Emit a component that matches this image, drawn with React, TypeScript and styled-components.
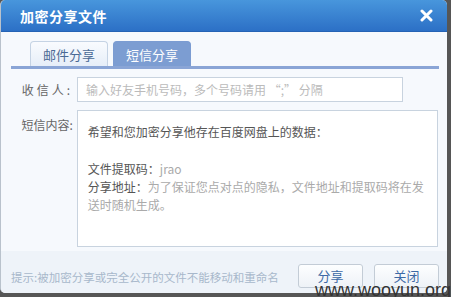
import React from "react";
import styled, { createGlobalStyle } from "styled-components";

const Global = createGlobalStyle`
  html, body { margin: 0; padding: 0; background: #565656; }
  body { font-family: "Noto Sans CJK SC", "Noto Sans", sans-serif; font-size: 12px; }
`;

const Stage = styled.div`
  position: relative;
  width: 451px;
  height: 297px;
  overflow: hidden;
`;

const Dialog = styled.div`
  width: 447px;
  height: 293px;
  background: #f6f9fd;
  border-radius: 5px;
  overflow: hidden;
  display: flex;
  flex-direction: column;
  box-sizing: border-box;
  border-left: 1px solid #b9c2cc;
`;

const Header = styled.div`
  height: 32px;
  flex: none;
  background: linear-gradient(#4896dc, #2c70c6);
  border-bottom: 1px solid #2563b5;
  box-sizing: border-box;
  display: flex;
  align-items: center;
  justify-content: space-between;
  padding: 0 14px 0 19px;
`;

const Title = styled.div`
  color: #fff;
  font-size: 14px;
  font-weight: bold;
  letter-spacing: 0.5px;
`;

const Close = styled.svg`
  width: 13px;
  height: 13px;
`;

const Tabs = styled.div`
  display: flex;
  gap: 5px;
  margin: 9px 8px 0 10px;
  padding-left: 19px;
  border-bottom: 3px solid #8aa5d6;
`;

const Tab = styled.div<{ $active?: boolean }>`
  width: 78px;
  height: 25px;
  box-sizing: border-box;
  display: flex;
  align-items: center;
  justify-content: center;
  border-radius: 4px 4px 0 0;
  font-size: 13px;
  border: 1px solid ${(p) => (p.$active ? "#7b9cd2" : "#c5d3e4")};
  border-bottom: none;
  background: ${(p) => (p.$active ? "#7c9dd2" : "linear-gradient(#f9fbfe, #e6eef8)")};
  color: ${(p) => (p.$active ? "#fff" : "#4a6a95")};
`;

const Body = styled.div`
  flex: 1;
  display: flex;
  flex-direction: column;
  gap: 8px;
  padding: 8px 9px 0 0;
`;

const Row = styled.div<{ $top?: boolean }>`
  display: flex;
  align-items: ${(p) => (p.$top ? "flex-start" : "center")};
`;

const Label = styled.div<{ $spaced?: boolean }>`
  width: 72px;
  text-align: right;
  color: #666;
  font-size: 12px;
  padding-right: 4px;
  letter-spacing: ${(p) => (p.$spaced ? "3px" : "0")};
  margin-top: ${(p) => (p.$spaced ? "0" : "6px")};
`;

const Input = styled.div`
  width: 326px;
  height: 25px;
  box-sizing: border-box;
  border: 1px solid #c8d3df;
  background: #fff;
  color: #bbb;
  font-size: 12px;
  padding-left: 8px;
  display: flex;
  align-items: center;
`;

const TextArea = styled.div`
  width: 362px;
  height: 137px;
  box-sizing: border-box;
  border: 1px solid #c8d3df;
  background: #fff;
  padding: 12px 10px 0 10px;
  font-size: 12px;
  line-height: 18px;
  color: #aaa;
`;

const Para = styled.p`
  margin: 0 0 19px 0;
  color: #555;
`;

const Line = styled.p`
  margin: 0;
`;

const Strong = styled.span`
  color: #555;
`;

const Footer = styled.div`
  height: 45px;
  flex: none;
  background: #eef3f9;
  display: flex;
  align-items: center;
  padding: 0 8px 6px 10px;
  box-sizing: border-box;
  margin-top: 4px;
`;

const Hint = styled.div`
  flex: 1;
  color: #a8b8cb;
  font-size: 11.5px;
  white-space: nowrap;
  padding-top: 12px;
`;

const Button = styled.div`
  width: 65px;
  height: 24px;
  flex: none;
  box-sizing: border-box;
  border: 1px solid #c3ccd6;
  border-radius: 3px;
  background: linear-gradient(#fdfeff, #eef2f7);
  color: #3d6aa6;
  font-size: 13px;
  display: flex;
  align-items: center;
  justify-content: center;
  margin-left: 11px;
  margin-top: 10px;
`;

const Watermark = styled.div`
  position: absolute;
  right: 0;
  bottom: -4px;
  font-family: "Liberation Sans", Arial, sans-serif;
  font-size: 18px;
  color: #333;
`;

export default function App() {
  return (
    <Stage>
      <Global />
      <Dialog>
        <Header>
          <Title>加密分享文件</Title>
          <Close viewBox="0 0 13 13">
            <path d="M2 2 L11 11 M11 2 L2 11" stroke="#fff" strokeWidth="3" strokeLinecap="round" />
          </Close>
        </Header>
        <Tabs>
          <Tab>邮件分享</Tab>
          <Tab $active>短信分享</Tab>
        </Tabs>
        <Body>
          <Row>
            <Label $spaced>收信人:</Label>
            <Input>输入好友手机号码，多个号码请用 “;” 分隔</Input>
          </Row>
          <Row $top>
            <Label>短信内容:</Label>
            <TextArea>
              <Para>希望和您加密分享他存在百度网盘上的数据：</Para>
              <Line>
                <Strong>文件提取码：</Strong>jrao
              </Line>
              <Line>
                <Strong>分享地址：</Strong>为了保证您点对点的隐私，文件地址和提取码将在发送时随机生成。
              </Line>
            </TextArea>
          </Row>
        </Body>
        <Footer>
          <Hint>提示:被加密分享或完全公开的文件不能移动和重命名</Hint>
          <Button>分享</Button>
          <Button>关闭</Button>
        </Footer>
      </Dialog>
      <Watermark>www.wooyun.org</Watermark>
    </Stage>
  );
}
